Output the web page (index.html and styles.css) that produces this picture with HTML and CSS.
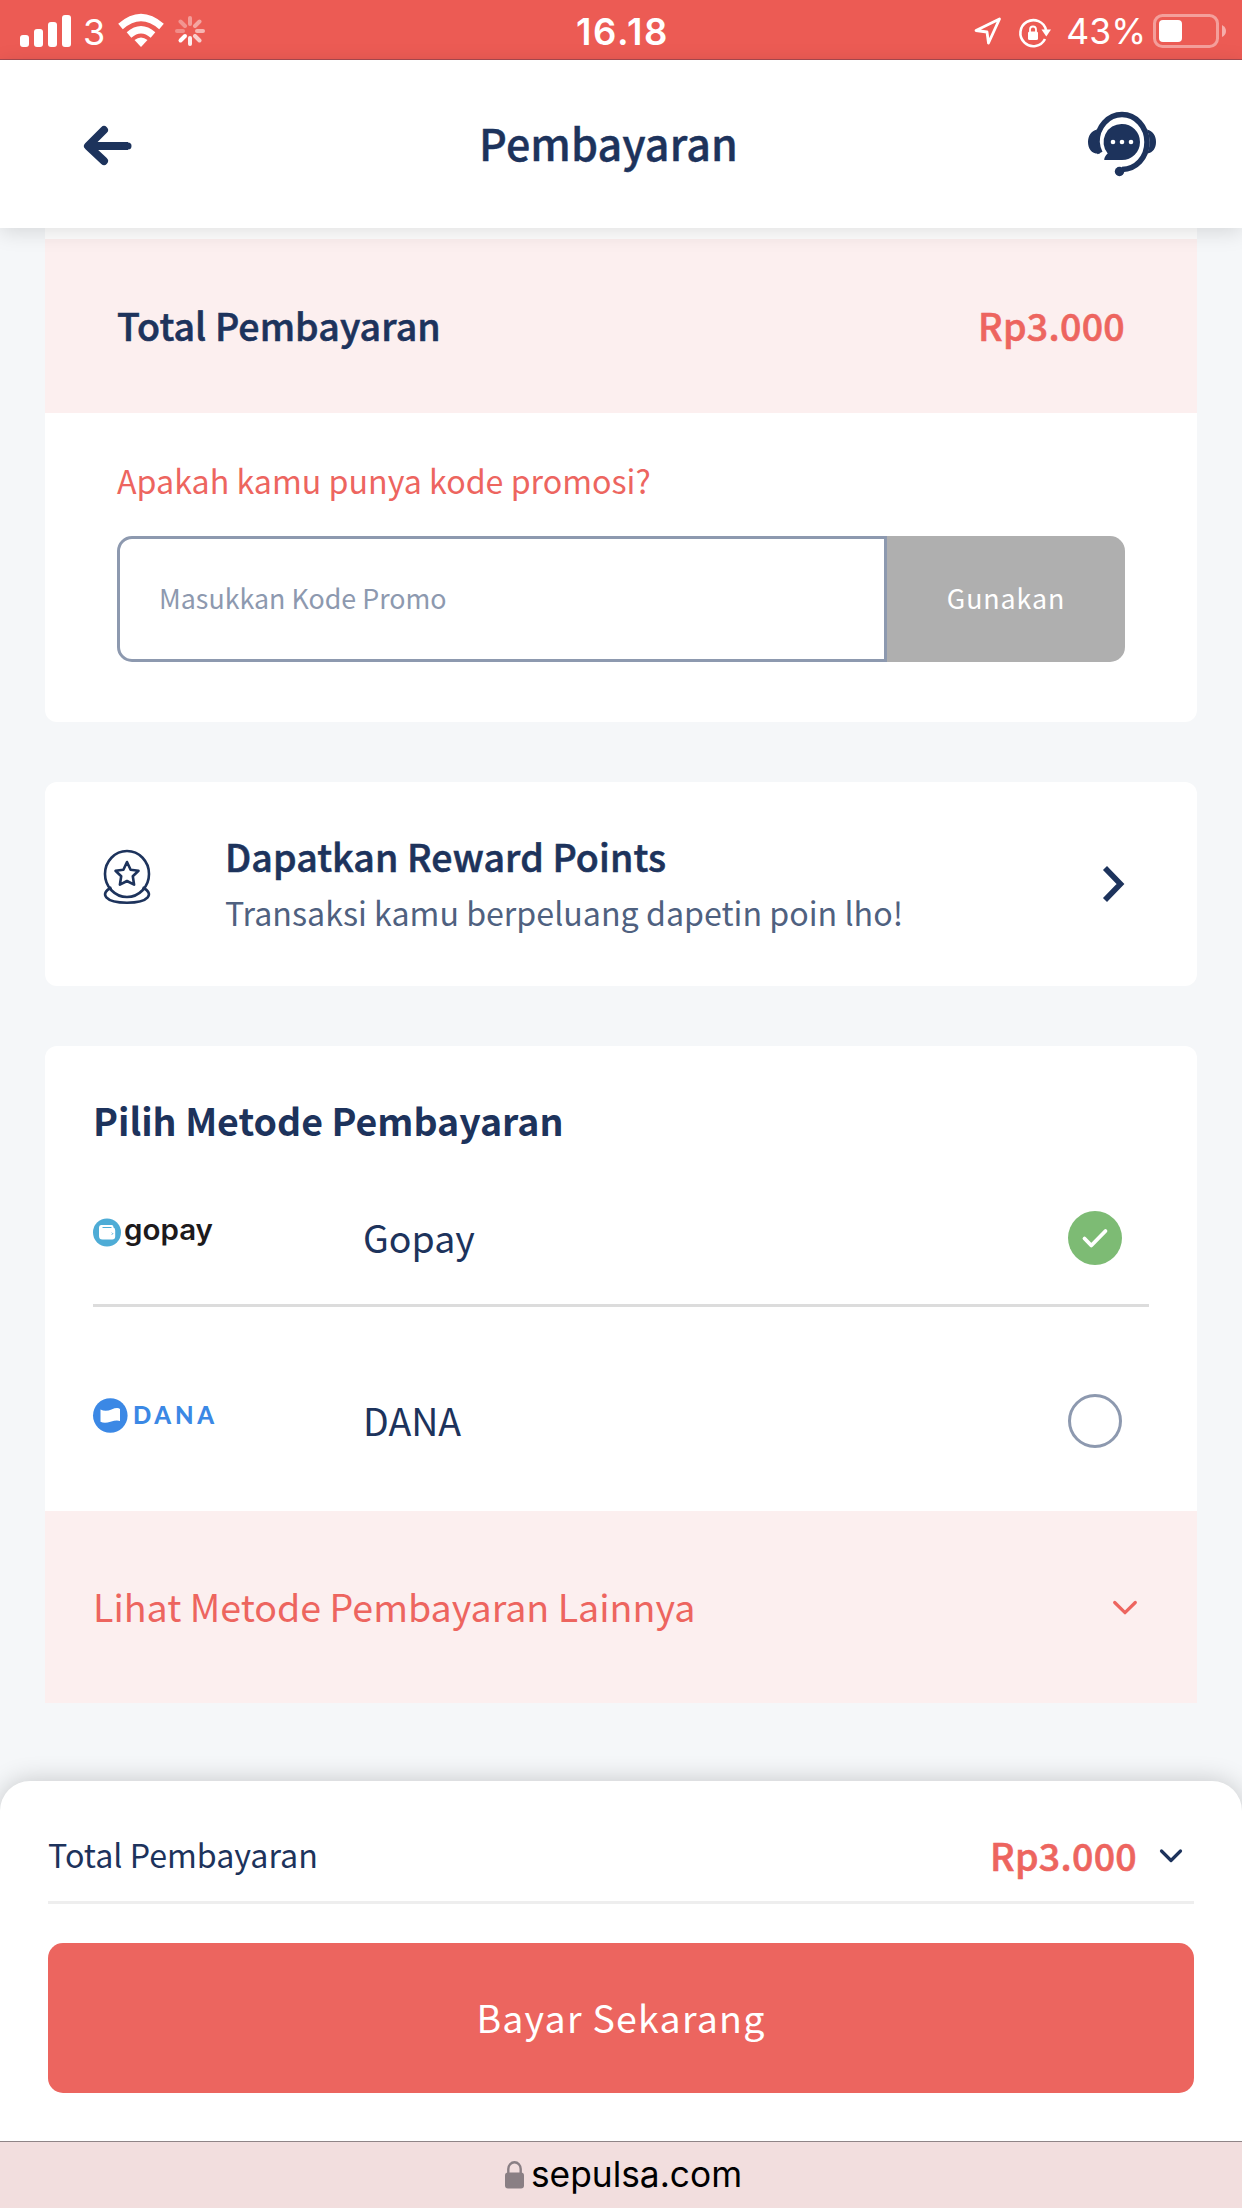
FILE: index.html
```html
<!DOCTYPE html>
<html lang="id">
<head>
<meta charset="utf-8">
<title>Pembayaran</title>
<link rel="stylesheet" href="styles.css">
</head>
<body>
<div class="screen">
  <div class="status">
    <div class="status-left">
      <svg width="52" height="34" viewBox="0 0 52 34" fill="#fff"><rect x="0" y="21" width="9" height="12" rx="3"/><rect x="14" y="15" width="9" height="18" rx="3"/><rect x="28" y="8" width="9" height="25" rx="3"/><rect x="42" y="1" width="9" height="32" rx="3"/></svg>
      <span class="carrier">3</span>
      <svg class="wifi" width="46" height="34" viewBox="0 0 46 34" fill="none" stroke="#fff" stroke-width="7"><path d="M2.500 12.500Q23-5.500 43.500 12.500"/><path d="M11 21Q23 10.500 35 21"/><path d="M23 33l-6.500-7q6.500-5 13 0z" fill="#fff" stroke="none"/></svg>
      <svg width="32" height="32" viewBox="-16 -16 32 32" stroke="#fff" stroke-width="4" stroke-linecap="round"><path d="M0-7V-13" opacity=".4"/><path d="M5-5l4.500-4.500" opacity=".45"/><path d="M7 0h6" opacity=".55"/><path d="M5 5l4.500 4.500" opacity=".7"/><path d="M0 7v6" opacity=".9"/><path d="M-5 5l-4.500 4.500"/><path d="M-7 0h-6" opacity=".3"/><path d="M-5-5l-4.500-4.500" opacity=".35"/></svg>
    </div>
    <div class="clock">16.18</div>
    <div class="status-right">
      <svg width="28" height="28" viewBox="0 0 28 28" fill="none" stroke="#fff" stroke-width="2.800" stroke-linejoin="round"><path d="M25.500 2L14.500 26 13 15 2 13.500z"/></svg>
      <svg class="rotation" width="32" height="30" viewBox="0 0 32 30" fill="none"><path d="M26 21A13 13 0 1 1 27 12" stroke="#fff" stroke-width="2.600"/><path d="M22.500 11.500h9.500l-4.700 7z" fill="#fff"/><rect x="9" y="13.500" width="10" height="8.500" rx="1.500" fill="#fff"/><path d="M11 14v-2.500a3 3 0 0 1 6 0V14" stroke="#fff" stroke-width="1.800"/></svg>
      <span class="percent">43%</span>
      <svg width="74" height="34" viewBox="0 0 74 34"><rect x="1.500" y="1.500" width="63" height="31" rx="8" fill="none" stroke="#fff" stroke-opacity=".42" stroke-width="3"/><rect x="6" y="6" width="23" height="22" rx="4" fill="#fff"/><path d="M69 11q4 2 4 6t-4 6z" fill="#fff" fill-opacity=".5"/></svg>
    </div>
  </div>

  <header class="header">
    <svg class="back" width="50" height="42" viewBox="0 0 50 42" fill="none" stroke="#1d335c" stroke-width="8" stroke-linecap="round" stroke-linejoin="round"><path d="M21 5L5 21l16 15"/><path d="M6 21h39" stroke-linecap="butt"/><path d="M42 21h3" stroke-width="7"/></svg>
    <h1 class="title">Pembayaran</h1>
    <svg class="support" width="68" height="66" viewBox="0 0 68 66"><path d="M12 41A25 27 0 0 1 9 30a25 27.500 0 0 1 50 0c0 16-11 27-25 27.500" fill="none" stroke="#1d335c" stroke-width="5.500"/><path d="M9 17.500C3 19 0 24 0 30c0 7 4 12.500 12 11.500Q7 30 9 17.500zM59 17.500c6 1.500 9 6.500 9 12.500s-3 10.500-8.500 11.500Q64 29 59 17.500z" fill="#1d335c"/><circle cx="31.500" cy="59.500" r="4.700" fill="#1d335c"/><path d="M34 12a18 18 0 1 1 0 36H16.200q0-3.500 3.500-6.500A18 18 0 0 1 34 12z" fill="#1d335c"/><g fill="#fff"><circle cx="25" cy="30" r="2.300"/><circle cx="34" cy="30" r="2.300"/><circle cx="43" cy="30" r="2.300"/></g></svg>
  </header>

  <main class="content">
    <section class="card bill">
      <div class="bill-total"><span class="bill-label">Total Pembayaran</span><span class="bill-amount">Rp3.000</span></div>
      <div class="promo">
        <div class="promo-label">Apakah kamu punya kode promosi?</div>
        <div class="promo-form">
          <div class="promo-input">Masukkan Kode Promo</div>
          <div class="promo-button">Gunakan</div>
        </div>
      </div>
    </section>

    <section class="card reward">
      <svg width="50" height="54" viewBox="0 0 50 54" fill="none" stroke="#1d335c" stroke-width="2.600" stroke-linejoin="round"><ellipse cx="25" cy="24" rx="22" ry="23"/><path d="M25 12l3.600 7.700 7.900 1.100-5.700 5.500 1.300 8.400-7.100-3.700-7.100 3.700 1.300-8.400-5.700-5.500 7.900-1.100z"/><path d="M9.500 37.500C-3 43.500 3 52.700 25 52.700s28-9.200 15.500-15.200"/></svg>
      <div class="reward-text">
        <div class="reward-title">Dapatkan Reward Points</div>
        <div class="reward-sub">Transaksi kamu berpeluang dapetin poin lho!</div>
      </div>
      <svg class="reward-go" width="23" height="38" viewBox="0 0 23 38" fill="none" stroke="#1d335c" stroke-width="5.600"><path d="M3 3l15.500 16L3 35"/></svg>
    </section>

    <section class="card methods">
      <h2 class="methods-title">Pilih Metode Pembayaran</h2>
      <div class="method method-first">
        <svg class="logo" width="122" height="36" viewBox="0 0 122 36"><circle cx="14" cy="17.500" r="14" fill="#4eacd6"/><path d="M8 10h11q1.500 0 1.500 2.500 1.700.5 1.700 3v6q0 3-3 3H9.500Q6 24.500 6 21v-8.500Q6 10 8 10z" fill="#fff"/><path d="M9.500 12.500h9M18.800 17.700l1 1-1 1" fill="none" stroke="#4eacd6" stroke-width="1"/><text class="gopay" x="31" y="25" textLength="89" lengthAdjust="spacingAndGlyphs">gopay</text></svg>
        <span class="method-name">Gopay</span>
        <span class="radio checked"><svg width="28" height="22" viewBox="0 0 28 22" fill="none" stroke="#fff" stroke-width="3.800" stroke-linecap="round" stroke-linejoin="round"><path d="M3.500 11.500l6.800 7L24.500 4"/></svg></span>
      </div>
      <div class="method method-last">
        <svg class="logo" width="122" height="36" viewBox="0 0 122 36"><circle cx="17.300" cy="17.500" r="17.300" fill="#3b88e5"/><path d="M7.500 11.500q5 2.500 11 0t8.500-.5v12q-3-1.500-9.500.7-6 2-10 0z" fill="#fff"/><text class="dana" x="40" y="26" textLength="81">DANA</text></svg>
        <span class="method-name">DANA</span>
        <span class="radio"></span>
      </div>
      <div class="more"><span>Lihat Metode Pembayaran Lainnya</span><svg width="26" height="18" viewBox="0 0 26 18" fill="none" stroke="#ed655f" stroke-width="3.200" stroke-linecap="round" stroke-linejoin="round"><path d="M2.700 3.500L13 13.700 23.300 3.500"/></svg></div>
    </section>
  </main>

  <footer class="sheet">
    <div class="sheet-total"><span class="sheet-label">Total Pembayaran</span><span class="sheet-amount">Rp3.000</span><svg width="24" height="18" viewBox="0 0 24 18" fill="none" stroke="#1d335c" stroke-width="3.200" stroke-linecap="round" stroke-linejoin="round"><path d="M2.500 4L12 13.500 21.500 4"/></svg></div>
    <div class="pay">Bayar Sekarang</div>
  </footer>
  <div class="urlbar"><svg width="19" height="28" viewBox="0 0 19 28"><rect y="11.500" width="19" height="16" rx="3" fill="#8a7f84"/><path d="M3.300 13V8a6.200 6.800 0 0 1 12.400 0v5" fill="none" stroke="#8a7f84" stroke-width="2.400"/></svg><span>sepulsa.com</span></div>
</div>
</body>
</html>
```
FILE: styles.css
```css
* { box-sizing: border-box; }
body {
  margin: 0;
  background: #f5f7f9;
  color: #1d335c;
  font-family: "Noto Sans CJK JP", "Noto Sans", sans-serif;
}
svg { display: block; flex: none; overflow: visible; }
.screen { width: 1242px; height: 2208px; display: flex; flex-direction: column; overflow: hidden; }

.status {
  height: 60px; flex: none; padding: 0 15px 0 20px;
  display: grid; grid-template-columns: 1fr auto 1fr; align-items: center;
  background: #ec5b54; border-bottom: 1px solid #a94a50;
  color: #fff; font-family: Inter, sans-serif; font-size: 36px; line-height: 60px;
}
.status-left, .status-right { display: flex; align-items: center; }
.status-right { justify-content: flex-end; }
.carrier { width: 21px; margin: 2px 14px 0 11px; }
.wifi { margin-right: 10px; }
.clock { font-size: 36.500px; font-weight: 600; letter-spacing: 1.600px; padding: 2px 2px 0 0; }
.rotation { margin: 3px 15px 0 17px; }
.percent { margin: 2px 7px 0 0; font-size: 35.500px; }

.header {
  height: 168px; flex: none; padding: 0 86px 0 83px;
  display: flex; align-items: center; justify-content: space-between;
  background: #fff; box-shadow: 0 4px 20px rgba(0, 0, 0, .13); position: relative; z-index: 1;
}
.back { margin-top: 3px; }
.support { margin-top: 2px; }
.title {
  margin: 0 4px 5px 0; font-size: 43px; line-height: 60px; font-weight: 500; letter-spacing: .1px;
  -webkit-text-stroke: .4px currentColor;
}

.content { flex: 1; padding: 0 45px; }
.card { background: #fff; border-radius: 12px; margin-bottom: 60px; }

.bill { padding-top: 11px; border-radius: 0 0 12px 12px; }
.bill-total {
  height: 174px; padding: 0 72px 3px; display: flex; align-items: center; justify-content: space-between;
  background: #fcefef; font-size: 37.500px; font-weight: 500; letter-spacing: .1px; -webkit-text-stroke: .6px currentColor;
}
.bill-amount { color: #ed655f; letter-spacing: .3px; }
.promo { padding: 42px 72px 60px; }
.promo-label { margin-bottom: 31px; color: #ed655f; font-size: 32.200px; line-height: 50px; }
.promo-form { display: flex; height: 126px; font-size: 26.800px; }
.promo-input {
  width: 770px; padding: 0 39px; line-height: 118px; color: #8d99af;
  border: 3px solid #8d99af; border-radius: 15px 0 0 15px;
}
.promo-button {
  flex: 1; line-height: 124px; text-align: center; letter-spacing: .9px;
  color: #fff; background: #afafaf; border-radius: 0 15px 15px 0;
}

.reward { height: 204px; padding: 49px 72px 0 57px; display: flex; align-items: flex-start; }
.reward > svg { margin-top: 19px; }
.reward-text { flex: 1; padding-left: 73px; }
.reward-title { font-size: 37.500px; line-height: 50px; font-weight: 500; letter-spacing: .1px; -webkit-text-stroke: .6px currentColor; }
.reward-sub { margin-top: 7px; font-size: 32.200px; line-height: 48px; color: #4f6180; }
.reward > .reward-go { margin-top: 34px; }

.methods { padding-top: 49px; margin: 0; border-radius: 12px 12px 0 0; }
.methods-title { margin: 0 48px; font-size: 37.500px; line-height: 50px; font-weight: 700; }
.method { margin: 0 48px; padding-right: 27px; display: flex; align-items: center; font-size: 37.500px; }
.method-first { height: 162px; padding-top: 27px; border-bottom: 3px solid #dcdcdc; }
.method-last { height: 204px; padding-top: 24px; }
.logo { margin: -11px 148px 0 0; }
.gopay { font: 600 28px Inter, sans-serif; fill: #1d1a1c; }
.dana { font: 900 24px Lato, sans-serif; fill: #3b88e5; }
.method-name { flex: 1; line-height: 50px; margin-top: -3px; }
.radio { width: 54px; height: 54px; border: 3px solid #8d99af; border-radius: 50%; display: flex; align-items: center; justify-content: center; }
.checked { background: #7dbb74; border: 0; }
.more {
  height: 192px; padding: 0 59px 0 48px; display: flex; align-items: center; justify-content: space-between;
  background: #fcefef; color: #ed655f; font-size: 37.600px;
}
.more span { margin-bottom: 3px; }
.more svg { margin-top: 2px; }

.sheet {
  height: 360px; flex: none; padding: 42px 48px 0; background: #fff;
  border-radius: 30px 30px 0 0; box-shadow: 0 0 26px rgba(0, 0, 0, .2);
}
.sheet-total { height: 81px; display: flex; align-items: center; padding: 0 11px 18px 0; border-bottom: 3px solid #eee; }
.sheet-label { flex: 1; font-size: 32.200px; line-height: 50px; margin-top: 1px; }
.sheet-amount {
  margin: 4px 22px 0 0; font-size: 37.500px; line-height: 50px; font-weight: 500; letter-spacing: .3px;
  color: #ed655f; -webkit-text-stroke: .6px currentColor;
}
.sheet-total svg { margin-top: 5px; }
.pay {
  height: 150px; margin-top: 39px; border-radius: 15px; background: #ec655f;
  color: #fff; font-size: 37.500px; line-height: 147px; text-align: center; letter-spacing: 1.250px;
}
.urlbar {
  height: 67px; flex: none; padding-left: 5px; display: flex; align-items: center; justify-content: center; gap: 7px;
  background: #f2dede; border-top: 1px solid #8f8587; color: #000;
  font: 35.300px/64px Inter, sans-serif;
}
```
